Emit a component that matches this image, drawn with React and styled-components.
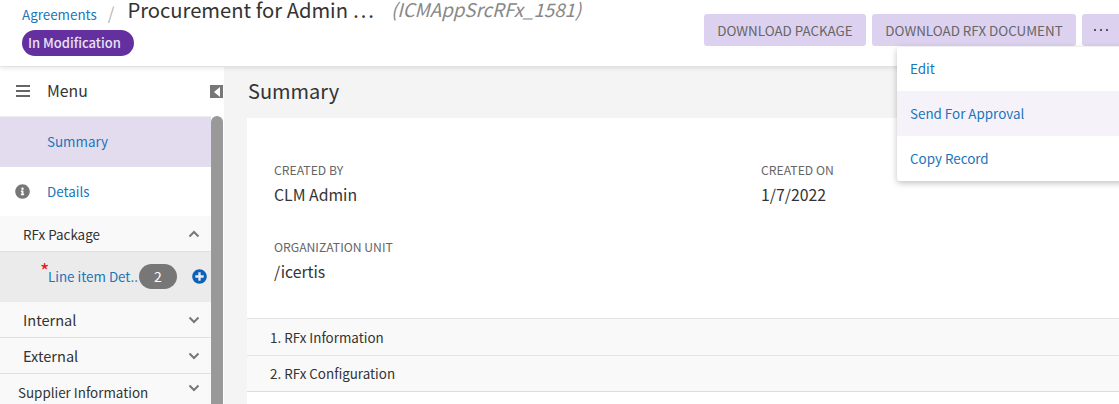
import React from "react";
import styled, { createGlobalStyle } from "styled-components";
import { FaInfoCircle, FaPlusCircle } from "react-icons/fa";

const Global = createGlobalStyle`
  html, body { margin: 0; padding: 0; background: #f4f4f4; }
  * { box-sizing: border-box; }
  body { font-family: "Noto Sans CJK SC", "Noto Sans", sans-serif; }
`;

const Page = styled.div`
  position: relative;
  width: 1119px;
  height: 404px;
  overflow: hidden;
  display: flex;
  flex-direction: column;
  background: #f4f4f4;
`;

const Header = styled.header`
  position: relative;
  z-index: 2;
  flex: none;
  height: 66px;
  background: #fff;
  box-shadow: 0 2px 5px rgba(0, 0, 0, 0.1);
  display: flex;
  justify-content: space-between;
  padding: 0 0 0 22px;
`;

const TitleBlock = styled.div`
  display: flex;
  flex-direction: column;
  align-items: flex-start;
`;

const Crumbs = styled.div`
  display: flex;
  align-items: center;
  height: 24px;
  white-space: nowrap;
`;

const CrumbLink = styled.a`
  font-size: 13.4px;
  line-height: 20px;
  color: #1b75bb;
  margin-top: 4px;
`;

const Slash = styled.span`
  font-size: 17px;
  line-height: 20px;
  color: #b5b5b5;
  margin: 2px 13px 0 11px;
`;

const Title = styled.h1`
  margin: -4px 0 0;
  font-size: 20.2px;
  line-height: 26px;
  font-weight: 400;
  color: #333;
`;

const RecordId = styled.span`
  font-size: 18.7px;
  line-height: 26px;
  font-style: italic;
  color: #888;
  margin: -6px 0 0 17px;
`;

const Status = styled.span`
  margin-top: 6px;
  height: 26px;
  width: 112px;
  border-radius: 13px;
  background: #6430a0;
  color: #e9e2f3;
  font-size: 13px;
  font-weight: 500;
  line-height: 26px;
  padding-left: 6px;
  white-space: nowrap;
`;

const Actions = styled.div`
  display: flex;
  gap: 6px;
  padding-top: 14px;
  margin-right: -10px;
`;

const ActionButton = styled.button`
  height: 32px;
  width: ${(p) => p.$w}px;
  padding: 0;
  border: 0;
  border-radius: 3px;
  background: #ddd1f0;
  color: #666;
  font-family: inherit;
  font-size: 13.4px;
  line-height: 32px;
  white-space: nowrap;
`;

const Dots = styled.svg`
  display: block;
  margin: 0 0 0 12px;
`;

const Dropdown = styled.ul`
  position: absolute;
  z-index: 3;
  left: 897px;
  top: 47px;
  width: 240px;
  margin: 0;
  padding: 0;
  list-style: none;
  background: #fff;
  border-radius: 3px;
  box-shadow: 0 2px 6px rgba(0, 0, 0, 0.25);
`;

const DropdownItem = styled.li`
  height: ${(p) => p.$h}px;
  padding-left: 13px;
  font-size: 13.4px;
  line-height: ${(p) => p.$h - 1}px;
  color: #1b75bb;
  background: ${(p) => (p.$active ? "#f5f3f9" : "transparent")};
`;

const Body = styled.div`
  flex: 1;
  min-height: 0;
  display: flex;
  padding-top: 1px;
`;

const Sidebar = styled.aside`
  position: relative;
  flex: none;
  width: 224px;
  background: #fff;
  display: flex;
  flex-direction: column;
`;

const MenuRow = styled.div`
  flex: none;
  height: 49px;
  padding: 0 0 2px 16px;
  display: flex;
  align-items: center;
  font-size: 15.8px;
  color: #333;
`;

const MenuIcon = styled.svg`
  margin-top: 1px;
`;

const MenuLabel = styled.span`
  margin-left: 17px;
`;

const Collapse = styled.span`
  position: absolute;
  left: 210px;
  top: 18px;
  width: 13px;
  height: 13px;
  background: #777;
  display: flex;
  align-items: center;
  justify-content: center;
`;

const SideScroll = styled.div`
  flex: 1;
  min-height: 0;
  display: flex;
`;

const Nav = styled.nav`
  flex: none;
  width: 211px;
  overflow: hidden;
`;

const Scrollbar = styled.div`
  flex: none;
  width: 12px;
  background: #999;
  border-radius: 6px 6px 0 0;
`;

const NavLink = styled.div`
  height: ${(p) => p.$h}px;
  display: flex;
  align-items: center;
  padding: 0 0 2px ${(p) => p.$pad}px;
  font-size: 13.4px;
  color: #1b75bb;
  background: ${(p) => (p.$active ? "#e3dcef" : "#fff")};
  border-top: ${(p) => (p.$active ? "1px solid #eee" : "0")};
`;

const NavInfo = styled(FaInfoCircle)`
  width: 15px;
  height: 15px;
  color: #777;
  margin: 2px 17px 0 0;
`;

const Group = styled.div`
  height: ${(p) => p.$h}px;
  display: flex;
  align-items: center;
  justify-content: space-between;
  padding: 0 11px 0 ${(p) => p.$pad}px;
  background: #f9f9f9;
  border-bottom: 1px solid #e0e0e0;
  font-size: ${(p) => p.$size || 13.4}px;
  color: #333;
  white-space: nowrap;
`;

const GroupChevron = styled.span`
  display: flex;
  margin-top: ${(p) => p.$shift || 0}px;
`;

const SubItem = styled.div`
  height: 50px;
  display: flex;
  align-items: center;
  padding: 0 0 2px 48px;
  background: #ebebeb;
  position: relative;
  font-size: 13.4px;
  color: #1b75bb;
`;

const Star = styled.span`
  position: absolute;
  left: 40px;
  top: 10px;
  color: #e11;
  font-size: 20px;
  line-height: 18px;
`;

const SubLabel = styled.span`
  width: 91px;
  white-space: nowrap;
`;

const Count = styled.span`
  width: 38px;
  height: 25px;
  border-radius: 13px;
  background: #777;
  color: #fff;
  font-size: 14px;
  line-height: 25px;
  text-align: center;
`;

const AddIcon = styled(FaPlusCircle)`
  width: 15px;
  height: 15px;
  margin-left: 15px;
  color: #0b62b8;
`;

const Main = styled.main`
  flex: 1;
  min-width: 0;
  display: flex;
  flex-direction: column;
  padding-left: 23px;
`;

const MainHeading = styled.h2`
  margin: 0;
  flex: none;
  height: 51px;
  padding-left: 1px;
  font-size: 20px;
  font-weight: 400;
  line-height: 48px;
  color: #333;
`;

const Card = styled.section`
  flex: 1;
  background: #fff;
`;

const Fields = styled.div`
  display: grid;
  grid-template-columns: 487px 1fr;
  grid-auto-rows: 77px;
  padding: 43px 0 0 27px;
  height: 200px;
`;

const Field = styled.div`
  display: flex;
  flex-direction: column;
`;

const FieldLabel = styled.span`
  font-size: 12.2px;
  line-height: 18px;
  color: #666;
`;

const FieldValue = styled.span`
  margin-top: 3px;
  font-size: 15.8px;
  line-height: 26px;
  color: #333;
`;

const Section = styled.div`
  height: ${(p) => p.$h}px;
  padding-left: 23px;
  background: #f9f9f9;
  border-top: 1px solid #e4e4e4;
  font-size: 13.4px;
  line-height: ${(p) => p.$h - 1}px;
  color: #333;
`;

const SectionEnd = styled.div`
  border-top: 1px solid #ddd;
`;

const Chevron = ({ up }) => (
  <svg width="12" height="8" viewBox="0 0 12 8" style={up ? { transform: "scaleY(-1)" } : undefined}>
    <path d="M1.5 1.5 6 6l4.500-4.500" fill="none" stroke="#777" strokeWidth="2" />
  </svg>
);

export default function App() {
  return (
    <Page>
      <Global />
      <Header>
        <TitleBlock>
          <Crumbs>
            <CrumbLink>Agreements</CrumbLink>
            <Slash>/</Slash>
            <Title>Procurement for Admin …</Title>
            <RecordId>(ICMAppSrcRFx_1581)</RecordId>
          </Crumbs>
          <Status>In Modification</Status>
        </TitleBlock>
        <Actions>
          <ActionButton $w={162}>DOWNLOAD PACKAGE</ActionButton>
          <ActionButton $w={204}>DOWNLOAD RFX DOCUMENT</ActionButton>
          <ActionButton $w={47}>
            <Dots width="14" height="4" viewBox="0 0 14 4">
              <g fill="#555">
                <rect x="0" y="1" width="2" height="2" />
                <rect x="6" y="1" width="2" height="2" />
                <rect x="12" y="1" width="2" height="2" />
              </g>
            </Dots>
          </ActionButton>
        </Actions>
      </Header>
      <Dropdown>
        <DropdownItem $h={44}>Edit</DropdownItem>
        <DropdownItem $h={45} $active>Send For Approval</DropdownItem>
        <DropdownItem $h={45}>Copy Record</DropdownItem>
      </Dropdown>
      <Body>
        <Sidebar>
          <MenuRow>
            <MenuIcon width="14" height="12" viewBox="0 0 14 12">
              <g fill="#666">
                <rect y="0" width="14" height="2" />
                <rect y="5" width="14" height="2" />
                <rect y="10" width="14" height="2" />
              </g>
            </MenuIcon>
            <MenuLabel>Menu</MenuLabel>
          </MenuRow>
          <Collapse>
            <svg width="6" height="10" viewBox="0 0 6 10">
              <path d="M6 0v10L0 5z" fill="#fff" />
            </svg>
          </Collapse>
          <SideScroll>
            <Nav>
              <NavLink $h={51} $pad={47} $active>Summary</NavLink>
              <NavLink $h={49} $pad={15}>
                <NavInfo />
                Details
              </NavLink>
              <Group $h={36} $pad={23}>RFx Package<GroupChevron><Chevron up /></GroupChevron></Group>
              <SubItem>
                <Star>*</Star>
                <SubLabel>Line item Det..</SubLabel>
                <Count>2</Count>
                <AddIcon />
              </SubItem>
              <Group $h={36} $pad={23} $size={14.6}>Internal<GroupChevron><Chevron /></GroupChevron></Group>
              <Group $h={36} $pad={23} $size={14.6}>External<GroupChevron><Chevron /></GroupChevron></Group>
              <Group $h={36} $pad={18}>Supplier Information<GroupChevron $shift={-7}><Chevron /></GroupChevron></Group>
            </Nav>
            <Scrollbar />
          </SideScroll>
        </Sidebar>
        <Main>
          <MainHeading>Summary</MainHeading>
          <Card>
            <Fields>
              <Field>
                <FieldLabel>CREATED BY</FieldLabel>
                <FieldValue>CLM Admin</FieldValue>
              </Field>
              <Field>
                <FieldLabel>CREATED ON</FieldLabel>
                <FieldValue>1/7/2022</FieldValue>
              </Field>
              <Field>
                <FieldLabel>ORGANIZATION UNIT</FieldLabel>
                <FieldValue>/icertis</FieldValue>
              </Field>
            </Fields>
            <Section $h={37}>1. RFx Information</Section>
            <Section $h={36}>2. RFx Configuration</Section>
            <SectionEnd />
          </Card>
        </Main>
      </Body>
    </Page>
  );
}
